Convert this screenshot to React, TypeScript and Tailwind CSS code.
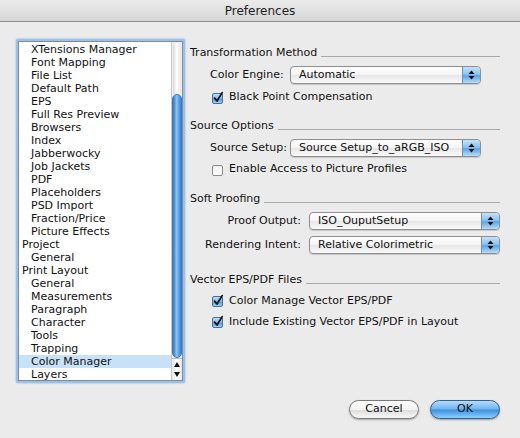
import React from "react";

type Item = { label: string; level: 0 | 1 };

const items: Item[] = [
  { label: "XTensions Manager", level: 1 },
  { label: "Font Mapping", level: 1 },
  { label: "File List", level: 1 },
  { label: "Default Path", level: 1 },
  { label: "EPS", level: 1 },
  { label: "Full Res Preview", level: 1 },
  { label: "Browsers", level: 1 },
  { label: "Index", level: 1 },
  { label: "Jabberwocky", level: 1 },
  { label: "Job Jackets", level: 1 },
  { label: "PDF", level: 1 },
  { label: "Placeholders", level: 1 },
  { label: "PSD Import", level: 1 },
  { label: "Fraction/Price", level: 1 },
  { label: "Picture Effects", level: 1 },
  { label: "Project", level: 0 },
  { label: "General", level: 1 },
  { label: "Print Layout", level: 0 },
  { label: "General", level: 1 },
  { label: "Measurements", level: 1 },
  { label: "Paragraph", level: 1 },
  { label: "Character", level: 1 },
  { label: "Tools", level: 1 },
  { label: "Trapping", level: 1 },
  { label: "Color Manager", level: 1 },
  { label: "Layers", level: 1 },
];

function SectionHeader({ title }: { title: string }) {
  return (
    <div className="flex h-[18px] items-center">
      <span className="leading-[14px]">{title}</span>
      <div className="ml-[4px] mt-[6px] h-px flex-1 bg-[#a9a9a9]" />
    </div>
  );
}

function Stepper() {
  return (
    <div className="flex h-full w-[18px] items-center justify-center rounded-r-[4px] border-l border-[#6f8fb3] bg-[linear-gradient(to_bottom,#c4e2fa,#8cc3f0_45%,#5aa4e4_55%,#b6dcf9)]">
      <svg width="7" height="10" viewBox="0 0 7 10">
        <path d="M3.5 0.5 L6.5 4 L0.5 4 Z" fill="#111" />
        <path d="M3.5 9.5 L6.5 6 L0.5 6 Z" fill="#111" />
      </svg>
    </div>
  );
}

function Popup({ value, width }: { value: string; width: string }) {
  return (
    <div
      className={`flex h-[18px] ${width} items-center rounded-[4px] border border-[#8e8e8e] bg-[linear-gradient(to_bottom,#ffffff,#f4f4f4_50%,#e6e6e6_51%,#fafafa)] shadow-[0_1px_1px_rgba(0,0,0,0.15)]`}
    >
      <span className="flex-1 truncate pl-[8px] leading-[14px]">{value}</span>
      <Stepper />
    </div>
  );
}

function Checkbox({ checked }: { checked: boolean }) {
  return (
    <svg width="13" height="13" viewBox="0 0 13 13" className="shrink-0">
      <defs>
        <linearGradient id="cbBlue" x1="0" y1="0" x2="0" y2="1">
          <stop offset="0" stopColor="#c6e3fb" />
          <stop offset="0.5" stopColor="#7db9ec" />
          <stop offset="0.55" stopColor="#4f9ce0" />
          <stop offset="1" stopColor="#a8d6fa" />
        </linearGradient>
        <linearGradient id="cbWhite" x1="0" y1="0" x2="0" y2="1">
          <stop offset="0" stopColor="#f0f0f0" />
          <stop offset="1" stopColor="#ffffff" />
        </linearGradient>
      </defs>
      <rect
        x="1.5"
        y="2.5"
        width="10"
        height="10"
        rx="1.5"
        fill={checked ? "url(#cbBlue)" : "url(#cbWhite)"}
        stroke={checked ? "#4d6f95" : "#8a8a8a"}
      />
      {checked && (
        <path
          d="M3.6 7.2 L6 10 L11.2 1.6"
          fill="none"
          stroke="#111"
          strokeWidth="1.8"
          strokeLinecap="round"
          strokeLinejoin="round"
        />
      )}
    </svg>
  );
}

function CheckRow({
  label,
  checked,
  className = "h-[22px]",
}: {
  label: string;
  checked: boolean;
  className?: string;
}) {
  return (
    <div className={`flex items-center pl-[21px] ${className}`}>
      <Checkbox checked={checked} />
      <span className="ml-[5px] leading-[14px]">{label}</span>
    </div>
  );
}

function PrefList() {
  return (
    <div className="h-[344px] w-[169px] rounded-[2px] bg-[#9cc0e6] p-[2px] shadow-[0_0_2px_#7aa7d8]">
      <div className="flex h-full border border-[#7d8d9e] bg-white">
        <div className="flex-1 overflow-hidden pt-[1px]">
          {items.map((it, i) => (
            <div
              key={i}
              className={`h-[13px] whitespace-nowrap leading-[13px] ${
                it.level === 0 ? "pl-[3px]" : "pl-[12px]"
              } ${it.label === "Color Manager" ? "bg-[#c7e1f6]" : ""}`}
            >
              {it.label}
            </div>
          ))}
        </div>
        <div className="flex w-[11px] flex-col border-l border-[#c9c9c9] bg-[#eeeeee]">
          <div className="mx-[1px] mt-[1px] h-[51px] rounded-t-[5px] bg-[linear-gradient(to_right,#d8d8d8,#ffffff_45%,#e4e4e4)]" />
          <div className="flex-1 rounded-[5px] border border-[#3e78b8] bg-[linear-gradient(to_right,#2f74c4,#8ec4f3_45%,#5da5e6_70%,#3c82cf)]" />
          <div className="flex h-[22px] flex-col items-center justify-around border-t border-[#bdbdbd] bg-[linear-gradient(to_right,#e6e6e6,#ffffff_50%,#e6e6e6)]">
            <svg width="6" height="5" viewBox="0 0 6 5">
              <path d="M3 0 L6 5 L0 5 Z" fill="#111" />
            </svg>
            <svg width="6" height="5" viewBox="0 0 6 5">
              <path d="M3 5 L6 0 L0 0 Z" fill="#111" />
            </svg>
          </div>
        </div>
      </div>
    </div>
  );
}

export default function App() {
  return (
    <div
      className="flex h-[438px] w-[520px] flex-col bg-[#ebebeb] text-[11px] text-[#111]"
      style={{ fontFamily: '"DejaVu Sans", "Noto Sans", sans-serif' }}
    >
      <div className="flex h-[22px] items-center justify-center border-b border-[#8c8c8c] bg-[linear-gradient(to_bottom,#ececec,#d6d6d6)]">
        <span className="text-[12px] text-[#222]">Preferences</span>
      </div>
      <div className="flex flex-1 pl-[16px] pt-[17px]">
        <PrefList />
        <div className="ml-[5px] flex w-[310px] flex-col pt-[5px]">
          <SectionHeader title="Transformation Method" />
          <div className="mt-[3px] flex h-[20px] items-center pl-[20px]">
            <span className="w-[80px] leading-[14px]">Color Engine:</span>
            <Popup value="Automatic" width="w-[191px]" />
          </div>
          <CheckRow label="Black Point Compensation" checked className="mt-[1px] h-[22px]" />
          <div className="mt-[9px]">
            <SectionHeader title="Source Options" />
          </div>
          <div className="mt-[3px] flex h-[20px] items-center pl-[20px]">
            <span className="w-[80px] leading-[14px]">Source Setup:</span>
            <Popup value="Source Setup_to_aRGB_ISO" width="w-[191px]" />
          </div>
          <CheckRow label="Enable Access to Picture Profiles" checked={false} />
          <div className="mt-[10px]">
            <SectionHeader title="Soft Proofing" />
          </div>
          <div className="mt-[1px] flex h-[24px] items-center">
            <span className="w-[119px] pr-[8px] text-right leading-[14px]">Proof Output:</span>
            <Popup value="ISO_OuputSetup" width="w-[191px]" />
          </div>
          <div className="flex h-[24px] items-center">
            <span className="w-[119px] pr-[8px] text-right leading-[14px]">Rendering Intent:</span>
            <Popup value="Relative Colorimetric" width="w-[191px]" />
          </div>
          <div className="mt-[14px]">
            <SectionHeader title="Vector EPS/PDF Files" />
          </div>
          <CheckRow label="Color Manage Vector EPS/PDF" checked className="mt-[1px] h-[21px]" />
          <CheckRow label="Include Existing Vector EPS/PDF in Layout" checked className="h-[21px]" />
          <div className="mt-[68px] flex justify-end gap-[11px]">
            <button className="flex h-[19px] w-[70px] items-center justify-center rounded-full border border-[#7a7a7a] bg-[linear-gradient(to_bottom,#ffffff,#f2f2f2_50%,#dcdcdc_52%,#f8f8f8)] shadow-[0_1px_2px_rgba(0,0,0,0.3)]">
              Cancel
            </button>
            <button className="flex h-[19px] w-[70px] items-center justify-center rounded-full border border-[#2d5f99] bg-[linear-gradient(to_bottom,#b4dcfb,#6fb3ee_48%,#3b8fe0_52%,#8fd0fb)] shadow-[0_1px_2px_rgba(0,0,0,0.35)]">
              OK
            </button>
          </div>
        </div>
      </div>
    </div>
  );
}
